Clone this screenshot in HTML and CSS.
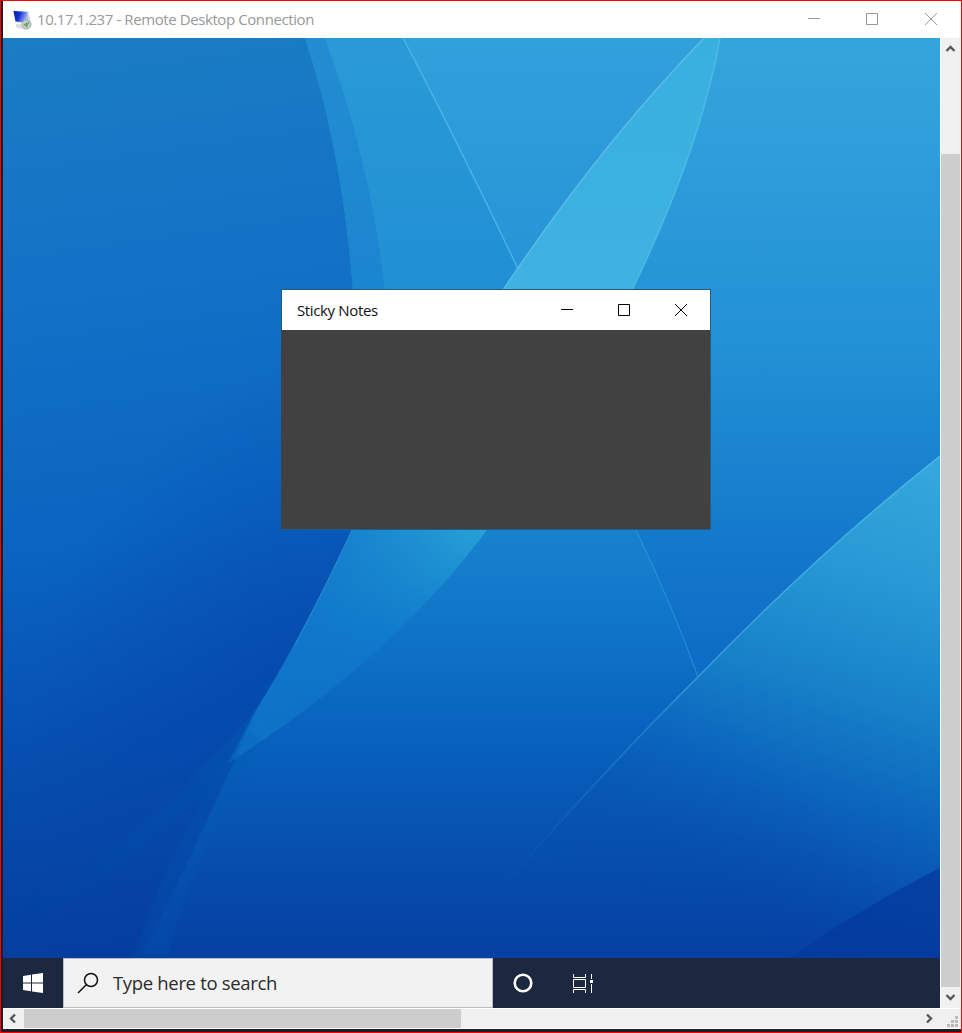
FILE: index.html
```html
<!DOCTYPE html>
<html lang="en">
<head>
<meta charset="utf-8">
<title>Remote Desktop Connection</title>
<link rel="stylesheet" href="styles.css">
</head>
<body>
<div class="frame">
  <header class="titlebar">
    <svg class="rdp-icon" width="20" height="20" viewBox="0 0 20 20">
      <defs><linearGradient id="scr" x1="0" x2="1" y1="0" y2=".3"><stop offset="0" stop-color="#0719a5"/><stop offset=".45" stop-color="#1231d4"/><stop offset="1" stop-color="#a9c0f2"/></linearGradient></defs>
      <path d="M4 14l9 1v4.500l-9-2z" fill="#dcdcdc"/>
      <path d="M1 .5l15.500 1 2.500 12-14-1z" fill="#d0d4de"/>
      <path d="M1.500 1l13.500 1 1.500 10.500-13-1z" fill="url(#scr)"/>
      <circle cx="14.500" cy="14.500" r="4.500" fill="#c9cecb" stroke="#a5a9a7"/>
      <path d="M12 14l2.300 2v-3.500M17.200 12.500L15 14.200v2.600" fill="none" stroke="#50a265" stroke-width="1.200"/>
    </svg>
    <span class="title">10.17.1.237 - Remote Desktop Connection</span>
    <svg class="controls" width="130" height="14" viewBox="0 0 130 14" fill="none" stroke="#999">
      <path d="M0 6.500h12M58.500 1.500h11v11h-11zM117 1l12 12M129 1l-12 12"/>
    </svg>
  </header>
  <div class="body">
    <main class="desktop">
      <svg class="wallpaper" viewBox="3 38 937 920" preserveAspectRatio="none">
        <defs>
          <filter id="soft" x="-10%" y="-10%" width="120%" height="120%"><feGaussianBlur stdDeviation="1.500"/></filter>
          <linearGradient id="left" gradientUnits="userSpaceOnUse" x1="0" y1="38" x2="130" y2="958"><stop offset="0" stop-color="#1b7dc4"/><stop offset=".3" stop-color="#1270c6"/><stop offset=".55" stop-color="#0a64c0"/><stop offset=".75" stop-color="#0650b1"/><stop offset="1" stop-color="#053d9d"/></linearGradient>
          <radialGradient id="dark" gradientUnits="userSpaceOnUse" cx="0" cy="0" r="1" gradientTransform="translate(290 660) rotate(30) scale(240 330)"><stop offset="0" stop-color="#0340a8" stop-opacity=".45"/><stop offset="1" stop-color="#0340a8" stop-opacity="0"/></radialGradient>
          <linearGradient id="right" gradientUnits="userSpaceOnUse" x1="0" y1="38" x2="0" y2="958"><stop offset="0" stop-color="#36a4dc"/><stop offset=".27" stop-color="#2695d7"/><stop offset=".5" stop-color="#1a86d0"/><stop offset=".63" stop-color="#1076c9"/><stop offset=".75" stop-color="#0863be"/><stop offset=".9" stop-color="#064dae"/><stop offset="1" stop-color="#0540a2"/></linearGradient>
          <linearGradient id="ribbon" gradientUnits="userSpaceOnUse" x1="0" y1="38" x2="0" y2="780"><stop offset="0" stop-color="#39afdf"/><stop offset=".34" stop-color="#3eb3e1"/><stop offset=".65" stop-color="#2aa5d8"/><stop offset=".8" stop-color="#107dcc"/><stop offset="1" stop-color="#0961bb"/></linearGradient>
          <linearGradient id="shade" gradientUnits="userSpaceOnUse" x1="330" y1="550" x2="460" y2="600"><stop offset="0" stop-color="#0f75c9" stop-opacity=".75"/><stop offset="1" stop-color="#0f75c9" stop-opacity="0"/></linearGradient>
          <linearGradient id="fold" gradientUnits="userSpaceOnUse" x1="950" y1="470" x2="800" y2="940"><stop offset="0" stop-color="#34a8dc"/><stop offset=".25" stop-color="#2799d5"/><stop offset=".5" stop-color="#1680c8"/><stop offset=".7" stop-color="#0c65bc"/><stop offset=".88" stop-color="#0850b0" stop-opacity=".8"/><stop offset="1" stop-color="#0647a8" stop-opacity="0"/></linearGradient>
          <linearGradient id="foldmask-g" gradientUnits="userSpaceOnUse" x1="700" y1="680" x2="500" y2="880"><stop offset="0" stop-color="#fff"/><stop offset="1" stop-color="#000"/></linearGradient>
          <mask id="foldmask" maskUnits="userSpaceOnUse" x="3" y="38" width="937" height="920"><path fill="url(#foldmask-g)" d="M3 38h937v920H3z"/></mask>
          <linearGradient id="edge" gradientUnits="userSpaceOnUse" x1="940" y1="456" x2="500" y2="900"><stop offset="0" stop-color="#4bb7e6"/><stop offset=".5" stop-color="#389ddc"/><stop offset="1" stop-color="#1467be" stop-opacity="0"/></linearGradient>
          <linearGradient id="facet" gradientUnits="userSpaceOnUse" x1="740" y1="350" x2="740" y2="680"><stop offset="0" stop-color="#0e6ac6" stop-opacity="0"/><stop offset=".6" stop-color="#0e6ac6" stop-opacity=".35"/><stop offset="1" stop-color="#0e6ac6" stop-opacity=".5"/></linearGradient>
          <linearGradient id="tail" gradientUnits="userSpaceOnUse" x1="250" y1="700" x2="20" y2="940"><stop offset="0" stop-color="#0a56b4"/><stop offset="1" stop-color="#0542a0"/></linearGradient>
        </defs>
        <path fill="url(#right)" d="M3 38h937v920H3z"/>
        <path fill="url(#left)" d="M3 38h302Q342 150 353 290V528Q302 640 255 712Q210 820 140 958H3z"/>
        <path fill="url(#dark)" d="M3 38h302Q342 150 353 290V528Q302 640 255 712Q150 830 3 915z"/>
        <path fill="#137aca" opacity=".55" d="M305 38Q342 150 353 290h32Q370 160 325 38z"/>
        <path fill="#1687cf" opacity=".35" d="M325 38Q370 160 385 290H528L403 38z"/>
        <path fill="#258fd9" opacity=".2" d="M403 38L518 268Q600 145 704 38z"/>
        <path fill="none" stroke="#54b9e9" stroke-width="1.300" opacity=".85" d="M403 38Q462 150 528 290"/>
        <path fill="url(#ribbon)" d="M704 38Q600 145 503 290Q420 405 352 530Q300 640 255 712L228 763Q390 660 487 530Q560 430 632 290Q700 150 720 38z"/>
        <path fill="url(#shade)" d="M352 530Q300 640 255 712L228 763Q390 660 487 530z"/>
        <path fill="none" stroke="#62bdea" stroke-width="1.200" d="M704 38Q600 145 503 290"/>
        <path fill="none" stroke="#4bbbe5" stroke-width="1.500" d="M720 38Q700 150 632 290"/>
        <path fill="none" stroke="#3a9bdc" opacity=".5" d="M352 530Q322 594 295 645"/>
        <g filter="url(#soft)">
          <path fill="url(#tail)" opacity=".5" d="M258 706Q170 830 3 912V935Q140 865 232 765z"/>
          <path fill="#0c5bb8" opacity=".22" d="M250 730Q180 820 130 965h35Q190 860 262 742z"/>
        </g>
        <path fill="url(#facet)" d="M632 290V520Q673 607 698 677L940 456V250H711z"/>
        <path fill="none" stroke="#329fdd" opacity=".7" d="M636 530Q673 607 698 677"/>
        <path fill="url(#fold)" mask="url(#foldmask)" d="M940 456Q820 551 698 677Q590 784 470 925L460 958H940z"/>
        <path fill="none" stroke="url(#edge)" stroke-width="1.500" d="M940 456Q820 551 698 677Q590 784 470 925"/>
        <path fill="#043a9c" opacity=".75" d="M940 868Q870 903 790 958h150z"/>
      </svg>
      <section class="note">
        <div class="note-bar">
          <span class="note-title">Sticky Notes</span>
          <svg width="128" height="14" viewBox="0 0 128 14" fill="none" stroke="#000"><path d="M0 6.500h12M57.500 1.500h11v11h-11zM114 1l12 12M126 1l-12 12"/></svg>
        </div>
        <div class="note-body"></div>
      </section>
      <footer class="taskbar">
        <div class="start">
          <svg width="20" height="20" viewBox="0 0 20 20" fill="#fff"><path d="M0 3l8-1.200V9.400H0zM9 1.600L20 0v9.400H9zM0 10.400h8v7.800L0 17zM9 10.400h11V20L9 18.400z"/></svg>
        </div>
        <div class="search">
          <svg width="22" height="22" viewBox="0 0 22 22" fill="none" stroke="#111" stroke-width="1.500"><circle cx="14" cy="8" r="6.500"/><path d="M9.300 12.700L1 21"/></svg>
          <span class="placeholder">Type here to search</span>
        </div>
        <svg class="cortana" width="20" height="20" viewBox="0 0 20 20"><circle cx="10" cy="10" r="8.300" fill="none" stroke="#fff" stroke-width="2.600"/></svg>
        <svg class="taskview" width="21" height="19" viewBox="0 0 21 19" fill="none" stroke="#fff"><path d="M.5 0v3.500h12V0M.5 5.500h12v8H.5zM.5 19v-3.500h12V19M18.500 0v5M18.500 10v9"/><path fill="#fff" stroke="none" d="M17 6h3v3h-3z"/></svg>
      </footer>
    </main>
    <aside class="vscroll">
      <svg width="19" height="20" viewBox="0 0 19 20"><path d="M5.500 13l4-4 4 4" fill="none" stroke="#555" stroke-width="2.300"/></svg>
      <div class="vthumb"></div>
      <svg width="19" height="20" viewBox="0 0 19 20"><path d="M5.500 8l4 4 4-4" fill="none" stroke="#555" stroke-width="2.300"/></svg>
    </aside>
  </div>
  <div class="hscroll">
    <svg width="21" height="19" viewBox="0 0 21 19"><path d="M12 5.500l-4 4 4 4" fill="none" stroke="#555" stroke-width="2.300"/></svg>
    <div class="hthumb"></div>
    <svg class="right-arrow" width="20" height="19" viewBox="0 0 20 19"><path d="M6 5.500l4 4-4 4" fill="none" stroke="#555" stroke-width="2.300"/></svg>
    <svg width="20" height="19" viewBox="0 0 20 19" fill="#b9b9b9"><path d="M14 7h3v3h-3zM10 11h3v3h-3zM14 11h3v3h-3zM6 15h3v3H6zM10 15h3v3h-3zM14 15h3v3h-3z"/></svg>
  </div>
</div>
</body>
</html>
```

FILE: styles.css
```css
* { box-sizing: border-box; }
body { margin: 0; font-family: "Open Sans", "Noto Sans", sans-serif; }
svg { display: block; flex: none; }
.frame {
  width: 962px; height: 1033px; border: 1px solid #f00;
  display: flex; flex-direction: column; background: #1c1f25;
  padding: 0 0 3px 2px;
}
.titlebar {
  height: 37px; flex: none; background: #fff; display: flex; align-items: center;
  padding: 0 23px 0 9px;
}
.rdp-icon { margin-right: 5px; }
.title { font-size: 15px; letter-spacing: -0.41px; color: #999; white-space: nowrap; padding-bottom: 2px; }
.controls { margin-left: auto; margin-bottom: 1px; }
.body { height: 970px; flex: none; display: flex; background: #fff; }
.desktop { width: 937px; display: flex; flex-direction: column; position: relative; }
.wallpaper { width: 937px; height: 920px; }
.note {
  position: absolute; left: 278px; top: 251px; width: 430px; height: 241px;
  border: 1px solid #245b82; display: flex; flex-direction: column;
}
.note-bar {
  height: 40px; background: #fff; display: flex; align-items: center;
  justify-content: space-between; padding: 0 21px 0 15px;
}
.note-title { font-size: 15px; letter-spacing: -0.36px; color: #111; }
.note-body { flex: 1; background: #414141; margin: 0 0 0 -1px; }
.taskbar { height: 50px; background: #1b2840; display: flex; align-items: center; }
.start { width: 60px; display: flex; justify-content: center; }
.search {
  width: 430px; height: 50px; background: #f2f2f2; border: 1px solid #b9bcc0;
  display: flex; align-items: center; padding-left: 13px;
}
.placeholder { font-size: 18.5px; letter-spacing: -0.33px; color: #2b2b2b; margin-left: 14px; white-space: nowrap; padding-bottom: 2px; }
.cortana { margin-left: 20px; }
.taskview { margin-left: 40px; }
.vscroll { width: 19px; margin-left: 1px; background: #f0f0f0; display: flex; flex-direction: column; }
.vthumb { height: 833px; margin-top: 96px; background: #cdcdcd; }
.hscroll { height: 21px; flex: none; border: solid #fff; border-width: 1px 0; background: #f0f0f0; display: flex; }
.hthumb { width: 437px; background: #cdcdcd; }
.right-arrow { margin-left: auto; }
```
